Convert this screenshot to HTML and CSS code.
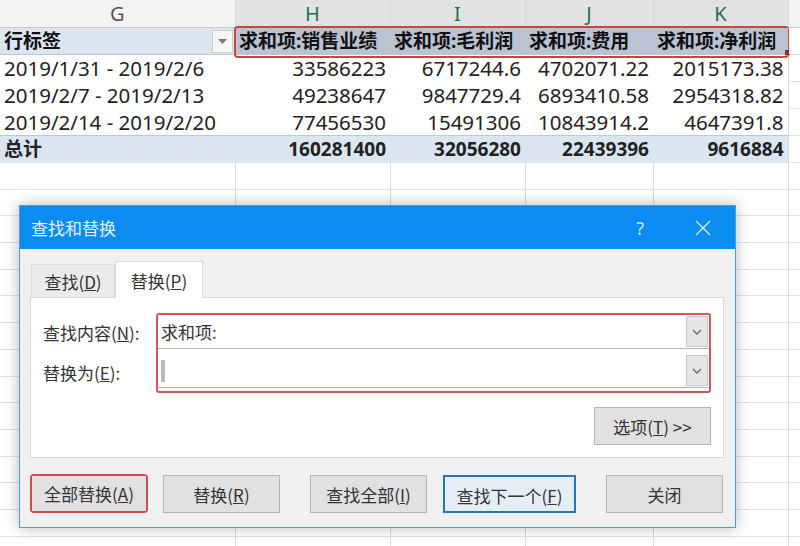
FILE: index.html
```html
<!DOCTYPE html>
<html lang="zh">
<head>
  <meta charset="UTF-8" />
  <title>查找和替换</title>
  <link rel="stylesheet" href="styles.css">
</head>
<body>
  <table class="sheet">
    <colgroup>
      <col style="width:235px"><col style="width:155px"><col style="width:135px">
      <col style="width:128px"><col style="width:135px"><col style="width:12px">
    </colgroup>
    <tr class="col-head">
      <th>G</th><th class="sel">H</th><th class="sel">I</th><th class="sel">J</th><th class="sel">K</th><th></th>
    </tr>
    <tr class="pivot-head">
      <td class="label">行标签<span class="filter"><svg width="9" height="6" viewBox="0 0 9 6"><path d="M0 0h9L4.5 5z" fill="#777"/></svg></span></td>
      <td class="hsel first">求和项:销售业绩<span class="mark"></span></td>
      <td class="hsel">求和项:毛利润</td>
      <td class="hsel">求和项:费用</td>
      <td class="hsel last">求和项:净利润<span class="handle"></span></td>
      <td class="edge"></td>
    </tr>
    <tr class="data"><td>2019/1/31 - 2019/2/6</td><td>33586223</td><td>6717244.6</td><td>4702071.22</td><td>2015173.38</td><td class="edge"></td></tr>
    <tr class="data"><td>2019/2/7 - 2019/2/13</td><td>49238647</td><td>9847729.4</td><td>6893410.58</td><td>2954318.82</td><td class="edge"></td></tr>
    <tr class="data"><td>2019/2/14 - 2019/2/20</td><td>77456530</td><td>15491306</td><td>10843914.2</td><td>4647391.8</td><td class="edge"></td></tr>
    <tr class="total"><td>总计</td><td>160281400</td><td>32056280</td><td>22439396</td><td>9616884</td><td class="edge"></td></tr>
    <tr class="empty"><td></td><td></td><td></td><td></td><td></td><td></td></tr>
    <tr class="empty"><td></td><td></td><td></td><td></td><td></td><td></td></tr>
    <tr class="empty"><td></td><td></td><td></td><td></td><td></td><td></td></tr>
    <tr class="empty"><td></td><td></td><td></td><td></td><td></td><td></td></tr>
    <tr class="empty"><td></td><td></td><td></td><td></td><td></td><td></td></tr>
    <tr class="empty"><td></td><td></td><td></td><td></td><td></td><td></td></tr>
    <tr class="empty"><td></td><td></td><td></td><td></td><td></td><td></td></tr>
    <tr class="empty"><td></td><td></td><td></td><td></td><td></td><td></td></tr>
    <tr class="empty"><td></td><td></td><td></td><td></td><td></td><td></td></tr>
    <tr class="empty"><td></td><td></td><td></td><td></td><td></td><td></td></tr>
    <tr class="empty"><td></td><td></td><td></td><td></td><td></td><td></td></tr>
    <tr class="empty"><td></td><td></td><td></td><td></td><td></td><td></td></tr>
    <tr class="empty"><td></td><td></td><td></td><td></td><td></td><td></td></tr>
    <tr class="empty"><td></td><td></td><td></td><td></td><td></td><td></td></tr>
    <tr class="empty"><td></td><td></td><td></td><td></td><td></td><td></td></tr>
  </table>

  <div class="dialog">
    <div class="titlebar">
      <span class="title">查找和替换</span>
      <span class="help">?</span>
      <svg class="close" width="16" height="16" viewBox="0 0 16 16"><path d="M1 1L15 15M15 1L1 15" stroke="#d6ebff" stroke-width="1.4"/></svg>
    </div>
    <div class="body">
      <div class="tabs">
        <div class="tab">查找(<u>D</u>)</div>
        <div class="tab active">替换(<u>P</u>)</div>
      </div>
      <div class="panel">
        <div class="fields">
          <div class="labels">
            <div class="lbl">查找内容(<u>N</u>):</div>
            <div class="lbl">替换为(<u>E</u>):</div>
          </div>
          <div class="redbox">
            <div class="combo"><span class="val">求和项:</span><span class="drop"><svg width="10" height="6" viewBox="0 0 10 6"><path d="M1 1l4 4 4-4" fill="none" stroke="#666" stroke-width="1.3"/></svg></span></div>
            <div class="combo"><span class="caret"></span><span class="drop"><svg width="10" height="6" viewBox="0 0 10 6"><path d="M1 1l4 4 4-4" fill="none" stroke="#666" stroke-width="1.3"/></svg></span></div>
          </div>
        </div>
        <div class="opt-row">
          <div class="btn opt">选项(<u>T</u>) &gt;&gt;</div>
        </div>
      </div>
      <div class="buttons">
        <div class="redbtn"><div class="btn">全部替换(<u>A</u>)</div></div>
        <div class="btn b-replace">替换(<u>R</u>)</div>
        <div class="btn b-findall">查找全部(<u>I</u>)</div>
        <div class="btn b-next">查找下一个(<u>F</u>)</div>
        <div class="btn b-close">关闭</div>
      </div>
    </div>
  </div>
</body>
</html>
```

FILE: styles.css
```css
html, body {
  margin: 0;
  padding: 0;
  background: #fff;
  overflow: hidden;
  font-family: "Noto Sans", "Noto Sans CJK SC", sans-serif;
  color: #222;
}

.sheet {
  border-collapse: collapse;
  table-layout: fixed;
  width: 800px;
}

.sheet td, .sheet th {
  padding: 0 4px;
  white-space: nowrap;
  overflow: visible;
}

.col-head th {
  height: 27px;
  background: #f3f3f3;
  border-right: 1px solid #d8d8d8;
  border-bottom: 1px solid #c8c8c8;
  font-weight: normal;
  font-size: 20px;
  color: #555;
  text-align: center;
  line-height: 27px;
}

.col-head th.sel {
  background: #e2e2e2;
  color: #217346;
}

.pivot-head td {
  height: 26px;
  line-height: 26px;
  background: #dce6f1;
  font-size: 19px;
  font-weight: bold;
  color: #111;
  border-bottom: 1px solid #b8c9dd;
  position: relative;
}

.pivot-head td.edge {
  background: #fff;
  border-bottom: 1px solid #e2e2e2;
  border-left: 1px solid #d8d8d8;
}

.pivot-head .hsel {
  background: #b9c3d2;
}

.filter {
  position: absolute;
  right: 2px;
  top: 2px;
  width: 19px;
  height: 21px;
  background: #f6f6f6;
  border: 1px solid #cfcfcf;
  display: flex;
  align-items: center;
  justify-content: center;
}

.mark {
  position: absolute;
  left: -1px;
  top: -2px;
  width: 551px;
  height: 28px;
  border: 2px solid #c9463f;
  border-radius: 4px;
  pointer-events: none;
}

.handle {
  position: absolute;
  right: -2px;
  bottom: -1px;
  width: 5px;
  height: 5px;
  background: #7a3a34;
}

.data td, .total td {
  height: 26px;
  font-size: 20.5px;
  text-align: right;
  line-height: 26px;
}

.data td:first-child, .total td:first-child {
  text-align: left;
}

.total td {
  background: #dce6f1;
  font-weight: bold;
  font-size: 19px;
  border-top: 1px solid #b8c9dd;
}

td.edge {
  background: #fff !important;
  border-left: 1px solid #d8d8d8;
  border-bottom: 1px solid #e2e2e2;
}

.empty td {
  height: 25.7px;
  border-right: 1px solid #dadada;
  border-bottom: 1px solid #e2e2e2;
}

/* dialog */
.dialog {
  position: absolute;
  left: 19px;
  top: 205px;
  width: 715px;
  height: 321px;
  background: #f0f0f0;
  border: 1px solid #4b9ddf;
  box-shadow: 0 0 14px rgba(0, 0, 0, 0.28);
  font-family: "Noto Sans CJK SC", sans-serif;
  font-size: 17px;
  color: #333;
}

.titlebar {
  height: 43px;
  background: #0b8cf1;
  display: flex;
  align-items: center;
  padding: 0 24px 0 11px;
}

.title {
  color: #e2f0ff;
  font-size: 17px;
  flex: 1;
}

.help {
  color: #cfe6ff;
  font-family: "Noto Sans", sans-serif;
  font-size: 18px;
  margin-right: 51px;
}

.body {
  padding: 12px 11px 0 10px;
}

.tabs {
  display: flex;
  align-items: flex-end;
  height: 36px;
}

.tab {
  width: 84px;
  height: 33px;
  line-height: 33px;
  text-align: center;
  background: #ebebeb;
  border: 1px solid #dcdcdc;
  border-bottom: none;
  box-sizing: border-box;
  margin-left: 1px;
}

.tab.active {
  background: #fff;
  height: 37px;
  line-height: 37px;
  width: 88px;
  margin-left: 0;
  margin-bottom: -1px;
  position: relative;
  z-index: 1;
}

.panel {
  background: #fff;
  border: 1px solid #dadada;
  height: 161px;
  padding: 15px 12px 0 12px;
  box-sizing: border-box;
}

.fields {
  display: flex;
}

.labels {
  width: 113px;
  display: flex;
  flex-direction: column;
}

.lbl {
  height: 40px;
  line-height: 40px;
}

.redbox {
  flex: 1;
  border: 2px solid #cf5a55;
  border-radius: 3px;
  display: flex;
  flex-direction: column;
  gap: 5px;
  padding: 0 0 1px 0;
}

.combo {
  height: 33px;
  border-bottom: 1px solid #b5b5b5;
  display: flex;
  align-items: center;
  padding-left: 3px;
  position: relative;
}

.val {
  flex: 1;
}

.caret {
  width: 4px;
  height: 22px;
  background: #b8b8b8;
  margin-right: auto;
}

.drop {
  width: 20px;
  height: 29px;
  background: #e6e6e6;
  border: 1px solid #c6c6c6;
  display: flex;
  align-items: center;
  justify-content: center;
  margin-right: 1px;
}

.opt-row {
  display: flex;
  justify-content: flex-end;
  margin-top: 14px;
}

.btn {
  height: 38px;
  line-height: 38px;
  background: #e1e1e1;
  border: 1px solid #b6b6b6;
  box-sizing: border-box;
  text-align: center;
  color: #333;
}

.opt {
  width: 117px;
}

.buttons {
  display: flex;
  align-items: center;
  margin-top: 16px;
}

.redbtn {
  border: 2px solid #cf4b48;
  border-radius: 4px;
  width: 118px;
  height: 39px;
  box-sizing: border-box;
}

.redbtn .btn {
  height: 35px;
  line-height: 35px;
  border: none;
}

.b-replace {
  width: 117px;
  margin-left: 15px;
}

.b-findall {
  width: 117px;
  margin-left: 30px;
}

.b-next {
  width: 133px;
  margin-left: 16px;
  border: 2px solid #2276b9;
  background: #e5eef7;
}

.b-close {
  width: 117px;
  margin-left: 30px;
}
```
